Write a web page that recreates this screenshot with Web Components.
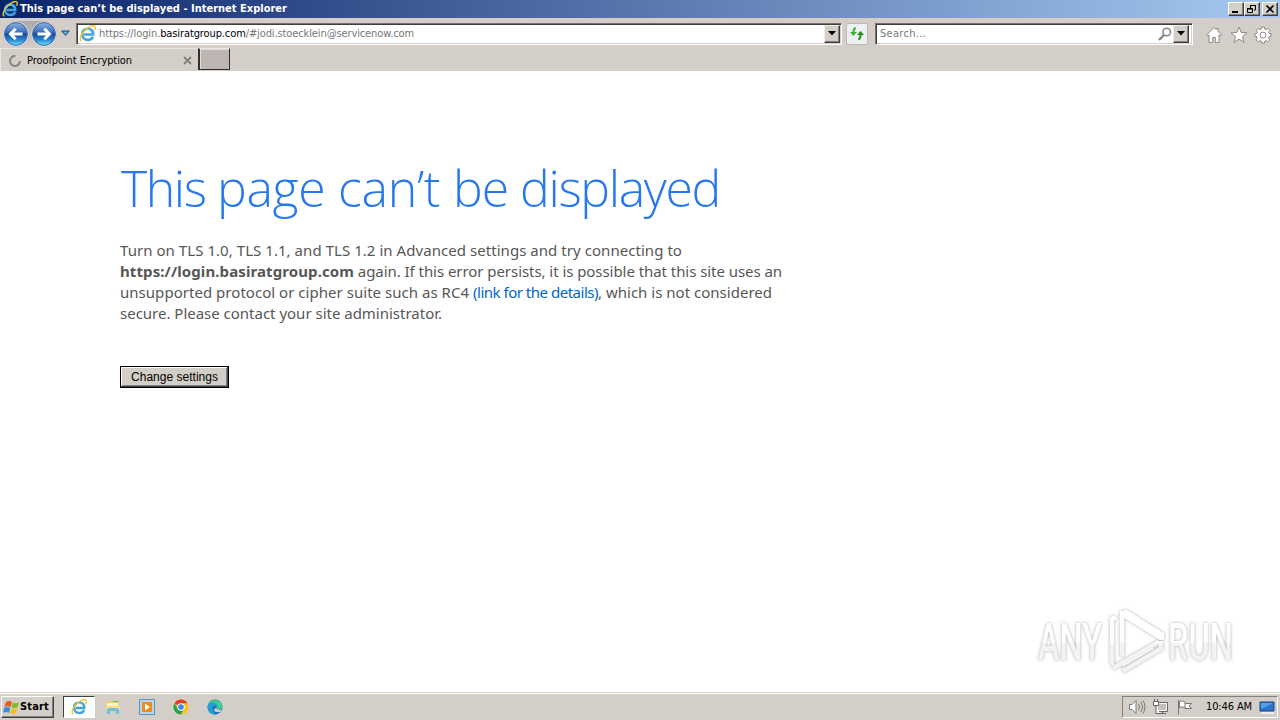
<!DOCTYPE html>
<html lang="en"><head><meta charset="utf-8"><title>This page can’t be displayed</title>
<style>html,body{margin:0;height:100%;overflow:hidden;background:#fff}</style></head>
<body><browser-desktop></browser-desktop>
<script>
function define(name, html) {
  const t = document.createElement('template');
  t.innerHTML = html;
  customElements.define(name, class extends HTMLElement {
    connectedCallback() {
      if (this.shadowRoot) return;
      this.attachShadow({mode:'open'}).append(t.content.cloneNode(true));
    }
  });
}
/* Text run whose tracking is adjusted to a given advance width. */
customElements.define('fit-text', class extends HTMLElement {
  connectedCallback() {
    if (!this.shadowRoot) this.attachShadow({mode:'open'}).innerHTML =
      '<style>:host{display:inline-block;white-space:pre;flex:none}</style><slot></slot>';
    const w = parseFloat(this.getAttribute('w'));
    requestAnimationFrame(() => this.fit(w));
    this.fit(w);
  }
  fit(w) {
    this.style.width = 'auto'; this.style.letterSpacing = '0px';
    const n = this.getBoundingClientRect().width;
    if (n) this.style.letterSpacing = (w - n) / this.textContent.length + 'px';
    this.style.width = w + 'px';
  }
});
define('ie-logo', `<style>:host{display:block;flex:none;width:16px;height:16px}svg{display:block;width:100%;height:100%}</style>
<svg viewBox="0 0 16 16" fill="none"><path d="M13.2 11.1C12.2 13 10.4 14 8.4 14 5.2 14 3 11.8 3 8.8 3 5.7 5.2 3.5 8.3 3.5c3.1 0 5.1 2.1 5 5.4H4.6" stroke="#3fa5e0" stroke-width="2.5"/><path d="M5.2 6.7C5.8 5.1 6.9 4.3 8.4 4.3s2.6.8 3 2.3" stroke="#8adaff" stroke-width=".8"/><path d="M2.4 15C.3 14.5.8 10.8 4 6.6 7.5 2.2 12.9-.5 14.7 1c.8.7.7 2.1-.1 3.8" stroke="#f4c62d" stroke-width="1.4"/></svg>`);

define('win-button', `<style>:host{display:flex;box-sizing:border-box;width:16px;height:14px;background:#d4d0c8;border:1px solid;border-color:#fff #404040 #404040 #fff;box-shadow:inset -1px -1px #808080;align-items:center;justify-content:center;flex:none}</style><slot></slot>`);
define('title-bar', `<style>:host{display:flex;box-sizing:border-box;height:18px;padding:0 2px 0 2px;align-items:center;background:linear-gradient(90deg,#0a246a,#a6caf0);color:#fff;font:bold 11px/18px "DejaVu Sans Condensed","DejaVu Sans",sans-serif}ie-logo{margin-right:2px;width:16px}.s{flex:1}.g{width:2px}svg{display:block}</style>
<ie-logo></ie-logo><fit-text w="267">This page can’t be displayed - Internet Explorer</fit-text><span class="s"></span>
<win-button><svg width="12" height="10"><path d="M2 8h6" stroke="#000" stroke-width="2"/></svg></win-button>
<win-button><svg width="12" height="10" fill="none" stroke="#000"><path d="M4.5 4V1.5h5V6H8M4 1.5h6M1.5 4.5h5v4h-5zM1 5h6"/></svg></win-button><span class="g"></span>
<win-button><svg width="12" height="10"><path d="M2.5 1.5l7 7m0-7l-7 7" stroke="#000" stroke-width="1.7"/></svg></win-button>`);

define('round-arrow', `<style>:host{display:block;width:26px;height:26px;flex:none}:host([forward]) svg{transform:scaleX(-1)}svg{display:block}</style>
<svg width="26" height="26" viewBox="0 0 26 26"><defs><linearGradient id="b" x2="0" y2="1"><stop stop-color="#8fb2df"/><stop offset=".42" stop-color="#396fba"/><stop offset=".5" stop-color="#174b9b"/><stop offset=".75" stop-color="#2785d2"/><stop offset="1" stop-color="#75e1ff"/></linearGradient></defs><circle cx="13" cy="13" r="12.4" fill="#e5eaf1"/><circle cx="13" cy="13" r="11.4" fill="url(#b)" stroke="#39629b"/><path d="M19.5 13H8M12.7 7.8L7.5 13l5.2 5.2" stroke="#fff" stroke-width="3" fill="none"/></svg>`);
define('drop-button', `<style>:host{display:flex;box-sizing:border-box;width:16px;height:18px;background:#d4cec8;border:1px solid;border-color:#eee #404040 #404040 #eee;box-shadow:inset -1px -1px #858080;align-items:center;justify-content:center;flex:none}</style><svg width="8" height="5"><path d="M0 0h8L4 4.5z"/></svg>`);
define('nav-field', `<style>:host{display:flex;box-sizing:border-box;height:22px;align-items:center;background:#fff;border:1px solid;border-color:#77716d #fff #fff #77716d;box-shadow:inset 1px 1px #403c40,inset -1px -1px #d4cec8;padding:1px 1px 1px 2px;flex:none;font:11px/18px "DejaVu Sans Condensed","DejaVu Sans",sans-serif;color:#777}</style><slot></slot>`);
define('nav-bar', `<style>:host{display:flex;box-sizing:border-box;height:30px;padding:1px 8px 0 3px;background:#d4cec8;align-items:center}.arrows{display:flex;gap:2px;background:linear-gradient(#aaa,#d4cec8);border-radius:13px}.tri{margin:0 6px 0 4px}svg{display:block;flex:none}.url{width:766px}.search{width:318px;margin-left:7px}b{font-weight:400;color:#000}ie-logo{margin:0 3px 0 0;width:17px;height:17px}.s{flex:1}.ref{box-sizing:border-box;width:22px;height:22px;background:#edf1f1;border:1px solid #bcb8b4;border-radius:2px;margin-left:4px}.home{margin-left:12px}.star{margin-left:7px}.gear{margin-left:6px}.home,.star,.gear{position:relative;top:1px}drop-button{margin-left:5px}.url drop-button{margin-left:0}</style>
<div class="arrows"><round-arrow></round-arrow><round-arrow forward></round-arrow></div>
<svg class="tri" width="9" height="7"><path d="M.7 1h7.6L4.5 5.4z" fill="#6aaddd" stroke="#174574"/></svg>
<nav-field class="url"><ie-logo></ie-logo><fit-text w="315">https://login.<b>basiratgroup.com</b>/#jodi.stoecklein@servicenow.com</fit-text><span class="s"></span><drop-button></drop-button></nav-field>
<svg class="ref" viewBox="0 0 20 20"><path d="M3 8h7L6.3 12z" fill="#43ad3c"/><path d="M8.8 4Q6.4 4.5 6.4 9" fill="none" stroke="#43ad3c" stroke-width="2"/><path d="M10 11h7L13.6 7z" fill="#238923"/><path d="M11.3 15.5Q13.6 15 13.6 10" fill="none" stroke="#238923" stroke-width="2"/></svg>
<nav-field class="search"><fit-text w="46" style="margin-left:2px">Search...</fit-text><span class="s"></span><svg width="14" height="14" fill="none" stroke="#858585"><circle cx="8.7" cy="5" r="3.8" stroke-width="1.5"/><path d="M6 8L1 13" stroke-width="2.4"/></svg><drop-button style="margin-left:1px;margin-right:2px"></drop-button></nav-field>
<svg class="home" width="18" height="18" fill="#fff" stroke="#8d8985"><path d="M9 1.5L1.5 9l1 1L4 9v7.5h3.7v-5h2.6v5H14V9l1.5 1 1-1L13 5.3V2.5h-2v1z"/></svg>
<svg class="star" width="18" height="18" fill="#fff" stroke="#8d8985"><path d="M9 1l2.2 5.4 5.8.4-4.5 3.7 1.5 5.8-5-3.2-5 3.2 1.5-5.8L1 6.8l5.8-.4z"/></svg>
<svg class="gear" width="18" height="18" viewBox="0 0 18 18" fill="#fff" stroke="#8d8985"><path d="M7.6 1h2.8l.4 2.1 1.2.5 1.8-1.2 2 2-1.2 1.8.5 1.2 2 .4v2.6l-2 .4-.5 1.2 1.2 1.8-2 2-1.8-1.2-1.2.5-.4 2H7.6l-.4-2-1.2-.5-1.8 1.2-2-2L3.4 12l-.5-1.2-2-.4V7.8l2-.4.5-1.2-1.2-1.8 2-2L6 3.6l1.2-.5z"/><circle cx="9" cy="9.1" r="3"/></svg>`);

define('tab-strip', `<style>:host{display:flex;box-sizing:border-box;height:23px;background:#d4cec8;font:11px/22px "DejaVu Sans Condensed","DejaVu Sans",sans-serif;color:#000}.tab{box-sizing:border-box;width:198px;display:flex;align-items:center;padding:1px 6px 0 7px;border-top:1px solid #ebe7e4;border-left:1px solid #ebe7e4}.s{flex:1}fit-text{margin-left:5px}.new{box-sizing:border-box;width:32px;height:22px;background:#bdb6b2;border:1px solid #332e2c;border-top-color:#e9e5e2;border-left-width:2px;box-shadow:inset 1px 1px #e1dcda}</style>
<div class="tab"><svg width="14" height="14" fill="none"><path d="M12 7a5 5 0 1 1-4.6-5" stroke="#858585" stroke-width="2"/></svg><fit-text w="105">Proofpoint Encryption</fit-text><span class="s"></span><svg width="9" height="9"><path d="M1 1l7 7m0-7L1 8" stroke="#85807d" stroke-width="1.8"/></svg></div><div class="new"></div>`);

define('any-run-mark', `<style>:host{display:block;width:220px;height:76px}svg{display:block;filter:drop-shadow(0 0 1.5px #aaa)}text{font:500 33.6px "Roboto","Liberation Sans",sans-serif}</style>
<svg width="220" height="76" viewBox="0 0 220 76"><defs><linearGradient id="g" gradientUnits="userSpaceOnUse" x1="0" y1="0" x2="0" y2="76"><stop offset=".49" stop-color="#fff"/><stop offset=".51" stop-color="#f3f3f3"/></linearGradient><linearGradient id="h" gradientUnits="userSpaceOnUse" x1="0" y1="0" x2="0" y2="49"><stop offset=".49" stop-color="#fff"/><stop offset=".51" stop-color="#f3f3f3"/></linearGradient></defs><g fill="url(#h)" transform="scale(1 1.55)"><text x="9" y="35.5" textLength="64" lengthAdjust="spacingAndGlyphs">ANY</text><text x="139" y="35.5" textLength="65" lengthAdjust="spacingAndGlyphs">RUN</text></g><g fill="none" stroke="url(#g)" stroke-width="4.5" transform="translate(-1 0)"><path d="M84 60V14l4-2M94 51V9l39 24M94 51V23M85 63l7-4 39-22"/><path d="M93 9l5-2 36 22.5V35M95 66l38-22.5V36M94 60l31-18"/></g></svg>`);
define('error-page', `<style>:host{display:flex;flex-direction:column;box-sizing:border-box;flex:1;min-height:0;padding:82px 30px 11px 120px;background:#fff;align-items:flex-start;font:15px/21px "Noto Sans","Open Sans",sans-serif;color:#575757}h1{display:flex;margin:0 0 0 1px;font:300 50px/70px "Open Sans",sans-serif;color:#2778ec;height:87px}.line{display:flex;height:21px}a{color:#0066cc}.btn{box-sizing:border-box;display:flex;align-items:center;justify-content:center;width:109px;height:22px;margin-top:42px;background:#d4cec8;border:1px solid #000;box-shadow:inset -1px -1px #404040,inset 1px 1px #fff,inset -2px -2px #858080;color:#000;font:12px/20px "Liberation Sans",sans-serif}.s{flex:1}any-run-mark{align-self:flex-end;margin-right:1px}</style>
<h1><fit-text w="96">This </fit-text><fit-text w="121">page </fit-text><fit-text w="115">can’t </fit-text><fit-text w="67">be </fit-text><fit-text w="200">displayed</fit-text></h1>
<div class="line"><fit-text w="562">Turn on TLS 1.0, TLS 1.1, and TLS 1.2 in Advanced settings and try connecting to</fit-text></div>
<div class="line"><fit-text w="234" style="font-weight:700">https://login.basiratgroup.com</fit-text><fit-text w="428"> again. If this error persists, it is possible that this site uses an</fit-text></div>
<div class="line"><fit-text w="353">unsupported protocol or cipher suite such as RC4 </fit-text><a><fit-text w="125">(link for the details)</fit-text></a><fit-text w="174">, which is not considered</fit-text></div>
<div class="line"><fit-text w="322">secure. Please contact your site administrator.</fit-text></div>
<div class="btn"><fit-text w="87">Change settings</fit-text></div><span class="s"></span><any-run-mark></any-run-mark>`);

define('task-bar', `<style>:host{display:flex;box-sizing:border-box;height:28px;background:#d4cec8;border-top:1px solid #d4cec8;box-shadow:inset 0 1px #fff;padding:3px 2px 2px 1px;align-items:center;font:11px/20px "DejaVu Sans Condensed","DejaVu Sans",sans-serif;color:#000}svg{display:block;flex:none}.start{box-sizing:border-box;width:53px;height:22px;display:flex;align-items:center;padding-left:1px;border:1px solid;border-color:#fff #404040 #404040 #fff;box-shadow:inset -1px -1px #858080;font-weight:700}.ie{box-sizing:border-box;width:32px;height:22px;margin-left:9px;border:1px solid;border-color:#404040 #fff #fff #404040;background:#fff;display:flex;align-items:center;justify-content:center}.apps{display:flex;gap:18px;margin-left:10px}.s{flex:1}.tray{box-sizing:border-box;width:156px;height:22px;border:1px solid;border-color:#858080 #fff #fff #858080;display:flex;align-items:center;padding-left:5px}</style>
<div class="start"><svg width="17" height="17" viewBox="0 0 17 17"><path d="M3 3q3-2 6 0L7.6 8Q5 6.5 1.5 8z" fill="#e95923"/><path d="M10 3.5q3 1.5 6-.3L14.5 8q-3 1.7-6 .2z" fill="#80b928"/><path d="M1.2 9q3-1.8 6 0L6 14q-3-2-6-.3z" fill="#368de3"/><path d="M8.2 9.3q3 1.5 6-.2L13 14q-3 1.8-6 0z" fill="#f5bd26"/></svg><fit-text w="29">Start</fit-text></div>
<div class="ie"><ie-logo></ie-logo></div>
<div class="apps"><svg width="16" height="16"><path d="M1 2h6l1 1h6v10H1z" fill="#efcf67"/><path d="M2 4h11v3H2z" fill="#fff5b8"/><path d="M8 2h5v1H8z" fill="#69b958"/><path d="M1 7h14v4H1z" fill="#f6df86"/><path d="M2 15V11q0-2 2-2h8q2 0 2 2v4h-3v-3H5v3z" fill="#75bde2"/></svg>
<svg width="16" height="16"><path d="M.5.5h15v15H.5z" fill="#b7d5eb" stroke="#5e91bd"/><path d="M3 3h10v10H3z" fill="#f28a17"/><path d="M6 4.5v7L11 8z" fill="#fff"/></svg>
<svg width="16" height="16" viewBox="0 0 16 16"><circle cx="8" cy="8" r="7.5" fill="#fbc515"/><path d="M8 8L1.5 4.25A7.5 7.5 0 0 1 14.5 4.25H8z" fill="#e33b2e"/><path d="M1.5 4.25A7.5 7.5 0 0 0 8 15.5L11 9.8 8 8l-3 1.7z" fill="#26a24b"/><circle cx="8" cy="8" r="3.8" fill="#fff"/><circle cx="8" cy="8" r="2.8" fill="#4285e8"/></svg>
<svg width="16" height="16" viewBox="0 0 16 16"><circle cx="8" cy="8" r="7.5" fill="#1670ba"/><path d="M1 7C2-1 14-1 15.5 7q0 4-4 3.5-3-.3-1.5-2Q10 5 6 5 2 5 1 7z" fill="#42c990"/><path d="M.5 8Q1 4 5 3.5q5 0 5 4.5Q8 5.5 6 8 4.5 12 9 15.4 1 16 .5 8z" fill="#229ed5"/><path d="M9.5 8.5q-.5 3 5 2l-.8 2.2Q9 14.5 6.5 11z" fill="#d4cec8"/></svg></div><span class="s"></span>
<div class="tray"><svg width="18" height="16" fill="none" stroke="#777"><path d="M1.5 5.5H4l4-4v13l-4-4H1.5z" fill="#fff"/><path d="M10.5 5q2 3 0 6M12.5 3q4 5 0 10M15 1.5q4 6.5 0 13"/></svg>
<svg style="margin-left:6px" width="17" height="16" fill="#fff" stroke="#666"><path d="M4.5 3.5h11v9h-11z"/><path d="M6 5h8v6H6z" fill="#c4c0bc" stroke="none"/><path d="M10.5 12.5v2M7 14.5h7M1.5 2.5h5v4h-5zM2.5 0v2M5.5 0v2M4 7v7.5h4"/></svg>
<svg style="margin-left:7px" width="17" height="16" fill="#fff" stroke="#777"><path d="M2.5 1v14.5M3.5 2.5q3-1.5 5.5.5v6q-3-2-5.5-.5zM9 4.5h6.5l-2.5 2.5 2.5 2.5H9"/></svg>
<fit-text w="46" style="margin-left:13px">10:46 AM</fit-text><svg style="margin-left:7px" width="17" height="15"><path d="M1 2h14v9H1z" fill="#2876cd" stroke="#174779"/><path d="M2 3h12L2 9z" fill="#5ba1e1"/><path d="M2 13h13" stroke="#f1f5f9" stroke-width="1.5"/></svg></div>`);
define('browser-desktop', `<style>:host{display:flex;flex-direction:column;width:1280px;height:720px;overflow:hidden}</style><title-bar></title-bar><nav-bar></nav-bar><tab-strip></tab-strip><error-page></error-page><task-bar></task-bar>`);
</script></body></html>
